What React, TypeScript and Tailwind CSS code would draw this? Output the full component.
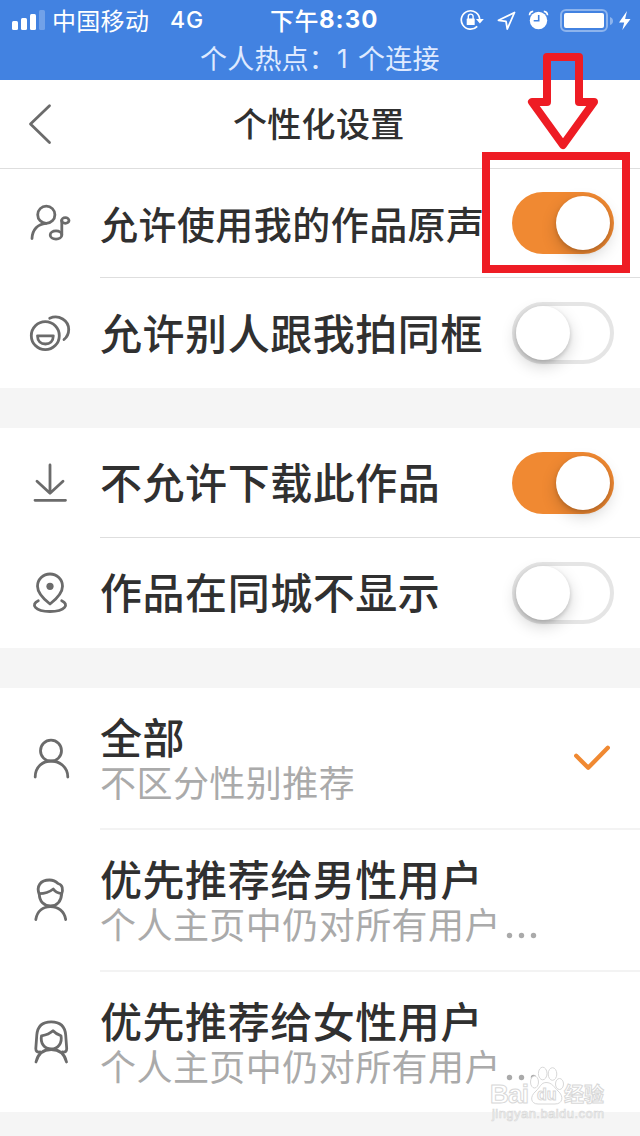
import type { ReactNode } from "react";

function Icon({ children }: { children: ReactNode }) {
  return (
    <svg
      className="ml-[26px] mr-[26px] h-12 w-12 shrink-0"
      viewBox="0 0 48 48"
      fill="none"
      stroke="#6b6b6b"
      strokeWidth="2.8"
      strokeLinecap="round"
      strokeLinejoin="round"
    >
      {children}
    </svg>
  );
}

const SoundIcon = () => (
  <Icon>
    <circle cx="20.3" cy="15.7" r="8.6" />
    <path d="M6 39.5C6.3 30.5 12 24.8 20 24.3" />
    <ellipse cx="30" cy="36" rx="5.8" ry="4.2" />
    <ellipse cx="39.3" cy="21.5" rx="3.7" ry="2.8" />
    <path d="M35.8 36V21.5" />
  </Icon>
);

const DuetIcon = () => (
  <Icon>
    <circle cx="19.3" cy="26.7" r="14" />
    <path d="M11.5 26.8h15.800c0 5.400-3.500 8.200-7.900 8.200S11.500 32.200 11.500 26.800Z" />
    <path d="M23.7 9.2C33 5.200 42.700 11.500 42.700 20.500C42.700 24.500 40.800 28.200 38 30.500" />
  </Icon>
);

const DownloadIcon = () => (
  <Icon>
    <path d="M24 6v28M11 22.300l13 12 13-12M9 41.300h30.500" />
  </Icon>
);

const PinIcon = () => (
  <Icon>
    <path d="M24 35C19.500 31.500 11.500 25 11.500 17.200a12.500 12.200 0 0 1 25 0C36.500 25 28.500 31.500 24 35Z" />
    <circle cx="24" cy="17.300" r="3.600" fill="#6b6b6b" stroke="none" />
    <path d="M12.300 31.700C4.500 35.200 8.500 42.500 24 42.500S43.500 35.200 35.700 31.700" />
  </Icon>
);

const PersonIcon = () => (
  <Icon>
    <circle cx="25" cy="16.700" r="10.500" />
    <path d="M9.200 43C9.200 33 16.500 27 25 27s16.800 6 16.800 16" />
  </Icon>
);

const MaleIcon = () => (
  <Icon>
    <path d="M13.300 18.500C10 10 14.500 4 23.500 4C27.500 4 30 5.500 32 7.500C36.500 8.500 37.500 13 35.500 18.500" />
    <path d="M13.300 17.700C20 17.700 23.500 16 27.300 13C29 15.500 31.500 17 35.500 17.700C35.500 25 31 30 24.500 30S13.300 25.500 13.300 17.700Z" />
    <path d="M9.800 43.500C11.300 35 17 30.700 24.500 30.700S38.300 35 39.700 43.500" />
  </Icon>
);

const FemaleIcon = () => (
  <Icon>
    <path d="M14 34C11 34.500 9.800 33 9.800 30.500L10.800 17C11.500 8 17 3.800 25.200 3.800S39 8 39.700 17L40.700 30.500C40.700 33 39.500 34.500 36.500 34" />
    <path d="M15.500 17.800C20.500 17 23.800 15.800 27 12.800C29 15 31.500 16.500 35 17.800C36.500 25 32 31 25.200 31S14 25 15.500 17.800Z" />
    <path d="M10 44C12 35.500 17.500 31.500 25.200 31.500S38.500 35.500 40.500 44" />
  </Icon>
);

function Toggle({ on }: { on: boolean }) {
  return (
    <div
      role="switch"
      aria-checked={on}
      className={
        on
          ? "mr-[26px] flex h-[62px] w-[102px] shrink-0 items-center justify-end rounded-full bg-[#f08932] p-1"
          : "mr-[26px] flex h-[62px] w-[102px] shrink-0 items-center rounded-full border-4 border-[#e5e5e5] bg-white"
      }
    >
      <div className="h-[54px] w-[54px] rounded-full bg-white shadow-[0_6px_16px_rgba(0,0,0,0.18),0_2px_4px_rgba(0,0,0,0.16)]" />
    </div>
  );
}

function SettingRow({
  icon,
  label,
  labelClass,
  on,
  rowClass,
}: {
  icon: ReactNode;
  label: string;
  labelClass: string;
  on: boolean;
  rowClass: string;
}) {
  return (
    <div className={`flex items-center ${rowClass}`}>
      {icon}
      <span className={`w-0 flex-1 whitespace-nowrap font-medium text-[#303030] ${labelClass}`}>{label}</span>
      <Toggle on={on} />
    </div>
  );
}

function OptionRow({
  icon,
  title,
  detail,
  dots,
  checked,
}: {
  icon: ReactNode;
  title: string;
  detail: string;
  dots?: boolean;
  checked?: boolean;
}) {
  return (
    <div className="flex h-[140px] items-center">
      {icon}
      <div className="flex flex-1 flex-col whitespace-nowrap pt-px">
        <span className="text-[42px] font-medium leading-[44px] tracking-[0.55px] text-[#303030]">{title}</span>
        <span className="flex text-[36px] leading-[46px] tracking-[0.45px] text-[#aaaaaa]">
          {detail}
          {dots && (
            <svg className="ml-[2px] h-[42px] w-10" viewBox="0 0 40 42" fill="#aaa">
              <circle cx="6.500" cy="35.500" r="2.700" />
              <circle cx="18.500" cy="35.500" r="2.700" />
              <circle cx="30.500" cy="35.500" r="2.700" />
            </svg>
          )}
        </span>
      </div>
      {checked && (
        <svg
          className="mr-[28px] h-7 w-10"
          viewBox="0 0 40 28"
          fill="none"
          stroke="#f08932"
          strokeWidth="4.300"
          strokeLinecap="round"
          strokeLinejoin="round"
        >
          <path d="M4.200 11.800l12 12L35.800 3.800" />
        </svg>
      )}
    </div>
  );
}

function StatusBar() {
  return (
    <div className="h-20 bg-[#4282e1] text-white">
      <div className="flex h-10 items-center whitespace-nowrap">
        <svg className="ml-3 h-5 w-[34px] shrink-0" viewBox="0 0 34 20" fill="#fff">
          <rect x="0" y="11" width="6" height="9" rx="1.500" />
          <rect x="9" y="8" width="6" height="12" rx="1.500" />
          <rect x="18" y="4" width="6" height="16" rx="1.500" />
          <rect x="27" y="0" width="6" height="20" rx="1.500" opacity=".25" />
        </svg>
        <span className="ml-[6px] w-[118px] pb-px text-[24px] leading-[36px] tracking-[0.300px]">中国移动</span>
        <span className="w-[100px] font-['Inter'] text-[23px] font-medium tracking-[0.800px]">4G</span>
        <span className="flex w-[190px] items-center">
          <span className="pb-px text-[24px] font-medium leading-[36px] tracking-[0.500px]">下午</span>
          <span className="font-['Inter'] text-[24px] font-bold tracking-[1px]">8:30</span>
        </span>
        <svg className="h-6 w-[176px] shrink-0" viewBox="0 0 176 24" fill="none" stroke="#fff">
          <path d="M17.200 18.300A9.200 9.200 0 1 1 19.700 11.500" strokeWidth="1.700" />
          <path d="M16 11h7.800l-3.900 4.600Z" fill="#fff" stroke="none" />
          <rect x="6.700" y="10.500" width="8" height="6.500" rx="0.500" fill="#fff" stroke="none" />
          <path d="M8.300 11V8.500a2.400 2.400 0 0 1 4.800 0V11" strokeWidth="1.400" />
          <path d="M54.500 4.500L38.500 12.300l7.500 1 1.300 7.700Z" strokeWidth="1.800" strokeLinejoin="round" />
          <circle cx="78.500" cy="12.500" r="8.700" fill="#fff" stroke="none" />
          <path d="M78.700 7v5.700h-5" stroke="#4282e1" strokeWidth="1.600" />
          <path d="M69.500 7.200c.2-2.600 1.300-3.700 3.700-3.900M87.500 7.200c-.2-2.600-1.300-3.700-3.700-3.900" strokeWidth="1.700" />
          <rect x="101" y="2" width="46" height="21" rx="5" strokeWidth="2" opacity=".4" />
          <rect x="104" y="5" width="40" height="15" rx="2" fill="#fff" stroke="none" />
          <path d="M150 9q3 1 3 4t-3 4Z" fill="#fff" stroke="none" opacity=".4" />
          <path d="M167 3l-8 11.500h5.200L162.300 22l8.200-11h-5.400Z" fill="#fff" stroke="none" />
        </svg>
      </div>
      <div className="flex h-10 items-start whitespace-nowrap pl-[200px] text-[27px] leading-[35px] tracking-[0.200px] text-[#dfeaff]">
        <span className="w-[137px]">个人热点：</span>
        <span className="w-[21px] pt-px font-['Inter'] text-[26px]">1</span>
        <span>个连接</span>
      </div>
    </div>
  );
}

function Watermark() {
  return (
    <svg className="absolute left-[488px] top-[1064px] h-16 w-[124px]" viewBox="0 0 124 64" fill="#fff" stroke="#d8d8d8" strokeWidth="1">
      <text x="2" y="39" fontFamily="Liberation Sans" fontWeight="bold" fontSize="26" textLength="39">Bai</text>
      <ellipse cx="46.500" cy="18" rx="4" ry="6" />
      <ellipse cx="54.700" cy="9.500" rx="4.300" ry="6.300" />
      <ellipse cx="64.500" cy="10" rx="4.300" ry="6.300" />
      <ellipse cx="71.500" cy="20" rx="4" ry="5.500" />
      <path d="M58 18.500c-5 0-6 5-10 8.500-7 6-5 13 2 13h17c8 0 9-8 3-13-4-4-6-8.500-12-8.500Z" />
      <text x="49" y="36" fontFamily="Liberation Sans" fontWeight="bold" fontSize="16">du</text>
      <text x="76" y="38" fontFamily="Noto Sans CJK SC" fontWeight="bold" fontSize="20">经验</text>
      <text x="4" y="54" fontFamily="Liberation Sans" fontSize="13" strokeWidth=".7" textLength="112">jingyan.baidu.com</text>
    </svg>
  );
}

export default function App() {
  return (
    <main className="relative h-[1136px] w-[640px] overflow-hidden bg-[#f5f5f5] font-['Noto_Sans_CJK_SC',sans-serif]">
      <StatusBar />
      <header className="flex h-[89px] items-center border-b border-[#dedede] bg-white">
        <svg
          className="ml-6 h-12 w-8"
          viewBox="0 0 32 48"
          fill="none"
          stroke="#6b6b6b"
          strokeWidth="2.800"
          strokeLinecap="round"
          strokeLinejoin="round"
        >
          <path d="M25.500 5.800L6.500 24l19 18.500" />
        </svg>
        <h1 className="ml-[177px] pb-[2px] text-[34px] font-medium leading-[48px] tracking-[0.300px] text-[#303030]">个性化设置</h1>
      </header>

      <section className="bg-white">
        <SettingRow icon={<SoundIcon />} label="允许使用我的作品原声" labelClass="pb-px text-[38px] tracking-[0.450px]" on rowClass="h-[108px]" />
        <div className="ml-[100px] h-px bg-[#dedede]" />
        <SettingRow icon={<DuetIcon />} label="允许别人跟我拍同框" labelClass="pb-1 text-[42px] tracking-[0.550px]" on={false} rowClass="h-[110px]" />
      </section>

      <section className="mt-10 bg-white">
        <SettingRow icon={<DownloadIcon />} label="不允许下载此作品" labelClass="pb-[5px] text-[42px] tracking-[0.550px]" on rowClass="h-[109px]" />
        <div className="ml-[100px] h-px bg-[#dedede]" />
        <SettingRow icon={<PinIcon />} label="作品在同城不显示" labelClass="pb-[5px] text-[42px] tracking-[0.550px]" on={false} rowClass="h-[110px]" />
      </section>

      <section className="mt-10 bg-white">
        <OptionRow icon={<PersonIcon />} title="全部" detail="不区分性别推荐" checked />
        <div className="ml-[100px] h-0.5 bg-[#f3f3f3]" />
        <OptionRow icon={<MaleIcon />} title="优先推荐给男性用户" detail="个人主页中仍对所有用户" dots />
        <div className="ml-[100px] h-0.5 bg-[#f3f3f3]" />
        <OptionRow icon={<FemaleIcon />} title="优先推荐给女性用户" detail="个人主页中仍对所有用户" dots />
      </section>

      <div className="absolute left-[482px] top-[152px] h-[121px] w-[148px] border-8 border-[#ee1c24]" />
      <svg
        className="absolute left-[523px] top-[49px] h-[104px] w-20"
        viewBox="0 0 80 104"
        fill="none"
        stroke="#ee1c24"
        strokeWidth="8"
        strokeLinejoin="round"
      >
        <path d="M24 8H56V53H71L40 96L9 53H24Z" />
      </svg>
      <Watermark />
    </main>
  );
}
